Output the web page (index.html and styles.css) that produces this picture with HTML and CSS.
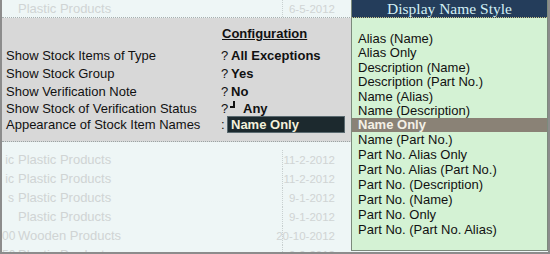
FILE: index.html
```html
<!DOCTYPE html>
<html lang="en">
<head>
    <meta charset="UTF-8">
    <title>Display Name Style</title>
    <link rel="stylesheet" href="styles.css">
</head>
<body>
    <div class="screen">
        <div class="row row-top">
            <span class="cut"></span>
            <span class="item">Plastic Products</span>
            <span class="date">6-5-2012</span>
        </div>

        <div class="config">
            <div class="config-title">Configuration</div>
            <div class="config-grid">
                <span class="label">Show Stock Items of Type</span>
                <span class="mark">?</span>
                <span class="value">All Exceptions</span>

                <span class="label">Show Stock Group</span>
                <span class="mark">?</span>
                <span class="value">Yes</span>

                <span class="label">Show Verification Note</span>
                <span class="mark">?</span>
                <span class="value">No</span>

                <span class="label">Show Stock of Verification Status</span>
                <span class="mark">?</span>
                <span class="value"><span class="corner"></span>Any</span>

                <span class="label">Appearance of Stock Item Names</span>
                <span class="mark">:</span>
                <span class="value"><span class="field">Name Only</span></span>
            </div>
        </div>

        <div class="rows">
            <div class="row"><span class="cut">ic</span><span class="item">Plastic Products</span><span class="date">11-2-2012</span></div>
            <div class="row"><span class="cut">ic</span><span class="item">Plastic Products</span><span class="date">11-2-2012</span></div>
            <div class="row"><span class="cut">s</span><span class="item">Plastic Products</span><span class="date">9-1-2012</span></div>
            <div class="row"><span class="cut"></span><span class="item">Plastic Products</span><span class="date">9-1-2012</span></div>
            <div class="row"><span class="cut">00</span><span class="item">Wooden Products</span><span class="date">20-10-2012</span></div>
            <div class="row"><span class="cut">50</span><span class="item">Plastic Products</span><span class="date">9-9-2012</span></div>
        </div>

        <div class="popup">
            <div class="popup-head">Display Name Style</div>
            <ul class="popup-list">
                <li>Alias (Name)</li>
                <li>Alias Only</li>
                <li>Description (Name)</li>
                <li>Description (Part No.)</li>
                <li>Name (Alias)</li>
                <li>Name (Description)</li>
                <li class="selected">Name Only</li>
                <li>Name (Part No.)</li>
                <li>Part No. Alias Only</li>
                <li>Part No. Alias (Part No.)</li>
                <li>Part No. (Description)</li>
                <li>Part No. (Name)</li>
                <li>Part No. Only</li>
                <li>Part No. (Part No. Alias)</li>
            </ul>
        </div>
    </div>
</body>
</html>
```

FILE: styles.css
```css
body {
    margin: 0;
    font-family: "Liberation Sans", Arial, sans-serif;
    font-size: 13px;
    color: #111;
}
.screen {
    position: relative;
    width: 550px;
    height: 254px;
    box-sizing: border-box;
    border-left: 2px solid #8c8c8c;
    border-right: 2px solid #8c8c8c;
    border-bottom: 2px solid #8c8c8c;
    background-color: #eef6f6;
    overflow: hidden;
}
.row {
    display: flex;
    align-items: center;
    height: 19px;
    color: #d0d4d4;
    font-size: 13px;
    white-space: nowrap;
}
.row-top {
    height: 17px;
    border-bottom: 1px dotted #a8b0b0;
}
.rows {
    padding-top: 8px;
}
.cut {
    width: 12px;
    margin-right: 4px;
    text-align: right;
    font-size: 12px;
}
.item {
    width: 264px;
}
.date {
    align-self: stretch;
    display: flex;
    align-items: center;
    justify-content: flex-end;
    width: 52px;
    padding-right: 6px;
    border-left: 1px dotted #c8d0d0;
    font-size: 11.5px;
}

/* configuration panel */
.config {
    height: 124px;
    box-sizing: border-box;
    padding: 8px 0 0 4px;
    background-color: #d8d8d8;
    border-bottom: 1px dotted #9aa4a4;
}
.config-title {
    margin-left: 216px;
    font-weight: bold;
    text-decoration: underline;
    line-height: 15px;
}
.config-grid {
    display: grid;
    grid-template-columns: 215px 10px 120px;
    grid-template-rows: 18px 18px 18px 16px 17px;
    margin-top: 5px;
    align-items: center;
}
.value {
    font-weight: bold;
}
.corner {
    display: inline-block;
    width: 3px;
    height: 5px;
    margin: 0 8px 0 -1px;
    border-right: 2px solid #111;
    border-bottom: 2px solid #111;
    vertical-align: 5px;
}
.field {
    display: block;
    margin-left: -4px;
    padding-left: 3px;
    width: 113px;
    height: 15px;
    line-height: 15px;
    background-color: #1c292e;
    border: 1px solid #5a6a70;
    color: #f4f0dc;
}

/* popup list */
.popup {
    position: absolute;
    left: 349px;
    top: 0;
    width: 197px;
    height: 251px;
    box-sizing: border-box;
    border: 1px solid #7c8a7c;
    border-top: none;
    background-color: #d4f2d4;
}
.popup-head {
    height: 17px;
    line-height: 17px;
    text-align: center;
    font-family: "Liberation Serif", "Times New Roman", serif;
    font-size: 15.5px;
    color: #d2f0f6;
    background-color: #243d5b;
    background-image: radial-gradient(#3a5676 0.6px, transparent 0.7px);
    background-size: 2px 2px;
    border-bottom: 1px dotted #c8c488;
}
.popup-list {
    list-style: none;
    margin: 0;
    padding: 14px 0 0;
}
.popup-list li {
    padding-left: 6px;
    line-height: 14.4px;
}
.popup-list li.selected {
    line-height: 14px;
    font-weight: bold;
    color: #f4f0e6;
    background-color: #8a8276;
    background-image: radial-gradient(#6e675e 0.6px, transparent 0.7px);
    background-size: 2px 2px;
}
.popup-list li.selected ~ li {
    line-height: 15px;
}
```
